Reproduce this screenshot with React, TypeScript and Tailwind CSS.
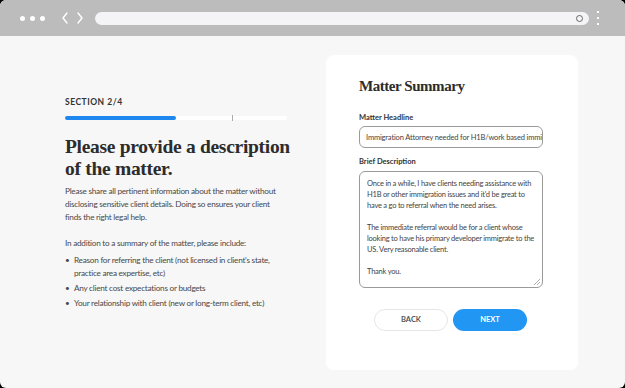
import React from "react";

const body = { fontFamily: "Lato, 'Noto Sans', sans-serif" };
const serif = { fontFamily: "'Liberation Serif', 'DejaVu Serif', serif" };

export default function App() {
  return (
    <div className="w-[625px] h-[388px] bg-black overflow-hidden">
      <div className="w-full h-full rounded-[6px] overflow-hidden bg-[#f7f7f7] flex flex-col" style={body}>
        {/* browser bar */}
        <div className="h-[36px] bg-[#bcbcbc] flex items-center pl-[20px] pr-[26px] shrink-0">
          <div className="flex gap-[5px] items-center">
            <span className="w-[5px] h-[5px] rounded-full bg-white" />
            <span className="w-[5px] h-[5px] rounded-full bg-white" />
            <span className="w-[5px] h-[5px] rounded-full bg-white" />
          </div>
          <svg width="22" height="12" viewBox="0 0 22 12" className="ml-[17px]" fill="none" stroke="white" strokeWidth="1.4" strokeLinecap="round" strokeLinejoin="round">
            <path d="M5 1 L1 6 L5 11" />
            <path d="M16 1 L20 6 L16 11" />
          </svg>
          <div className="ml-[11px] flex-1 h-[13px] rounded-full bg-[#f4f4f6] flex items-center justify-end pr-[6px]">
            <span className="w-[7px] h-[7px] rounded-full border-[1.5px] border-[#666]" />
          </div>
          <div className="ml-[8px] flex flex-col gap-[4px]">
            <span className="w-[2px] h-[2px] bg-white" />
            <span className="w-[2px] h-[2px] bg-white" />
            <span className="w-[2px] h-[2px] bg-white" />
          </div>
        </div>
        {/* content */}
        <div className="flex flex-1 pl-[65px]">
          <div className="w-[222px] pt-[60px] text-[#333]">
            <div className="text-[8.5px] font-bold tracking-[0.06em] text-[#333]">SECTION 2/4</div>
            <div className="mt-[7px] h-[4px] flex bg-white rounded-full">
              <div className="w-[111px] h-full rounded-full bg-[#1e88f0]" />
              <div className="w-[56px]" />
              <div className="w-[1px] h-[6px] -mt-[1px] bg-[#aaa]" />
            </div>
            <h1 className="mt-[16px] text-[19.5px] leading-[22px] font-bold text-[#2c2c2c] tracking-[-0.015em] whitespace-nowrap" style={serif}>
              Please provide a description<br />of the matter.
            </h1>
            <div className="tracking-[-0.03em] text-[8.2px] leading-[13px] text-[#484848] whitespace-nowrap">
              <p className="mt-[5px]">
                Please share all pertinent information about the matter without<br />
                disclosing sensitive client details. Doing so ensures your client<br />
                finds the right legal help.
              </p>
              <p className="mt-[13px]">In addition to a summary of the matter, please include:</p>
              <ul className="mt-[4px] flex flex-col gap-[2px]">
                <li className="flex">
                  <span className="w-[9px] shrink-0">•</span>
                  <span>Reason for referring the client (not licensed in client's state,<br />practice area expertise, etc)</span>
                </li>
                <li className="flex">
                  <span className="w-[9px] shrink-0">•</span>
                  <span>Any client cost expectations or budgets</span>
                </li>
                <li className="flex">
                  <span className="w-[9px] shrink-0">•</span>
                  <span>Your relationship with client (new or long-term client, etc)</span>
                </li>
              </ul>
            </div>
          </div>
          <div className="ml-[39px] mt-[19px] w-[252px] h-[315px] bg-white rounded-[8px] pl-[33px] pr-[35px] pt-[21px]">
            <h2 className="text-[15px] leading-[20px] font-bold text-[#2c2c2c] tracking-[-0.03em]" style={serif}>Matter Summary</h2>
            <div className="mt-[16px] text-[7.5px] font-bold text-[#333]">Matter Headline</div>
            <div className="mt-[3px] h-[22px] border border-[#9a9a9a] rounded-[6px] px-[6px] flex items-center overflow-hidden">
              <span className="text-[7.5px] text-[#444] whitespace-nowrap tracking-[-0.02em]">Immigration Attorney needed for H1B/work based immigration</span>
            </div>
            <div className="mt-[8px] text-[7.5px] font-bold text-[#333]">Brief Description</div>
            <div className="mt-[3px] h-[117px] border border-[#9a9a9a] rounded-[6px] px-[7px] pt-[6px] text-[7.5px] leading-[11px] text-[#444] relative whitespace-nowrap tracking-[-0.03em]">
              <p>Once in a while, I have clients needing assistance with<br />H1B or other immigration issues and it'd be great to<br />have a go to referral when the need arises.</p>
              <p className="mt-[11px]">The immediate referral would be for a client whose<br />looking to have his primary developer immigrate to the<br />US. Very reasonable client.</p>
              <p className="mt-[11px]">Thank you.</p>
              <svg width="6" height="6" viewBox="0 0 6 6" className="absolute right-[2px] bottom-[2px]" stroke="#999" strokeWidth="0.8">
                <path d="M0 6 L6 0 M3 6 L6 3" />
              </svg>
            </div>
            <div className="mt-[21px] flex gap-[5px] pl-[15px]">
              <button className="w-[74px] h-[22px] rounded-full border border-[#e6e6e6] bg-white text-[7.5px] font-bold text-[#555]">BACK</button>
              <button className="w-[74px] h-[22px] rounded-full bg-[#2196f3] text-[7.5px] font-bold text-white">NEXT</button>
            </div>
          </div>
        </div>
      </div>
    </div>
  );
}
